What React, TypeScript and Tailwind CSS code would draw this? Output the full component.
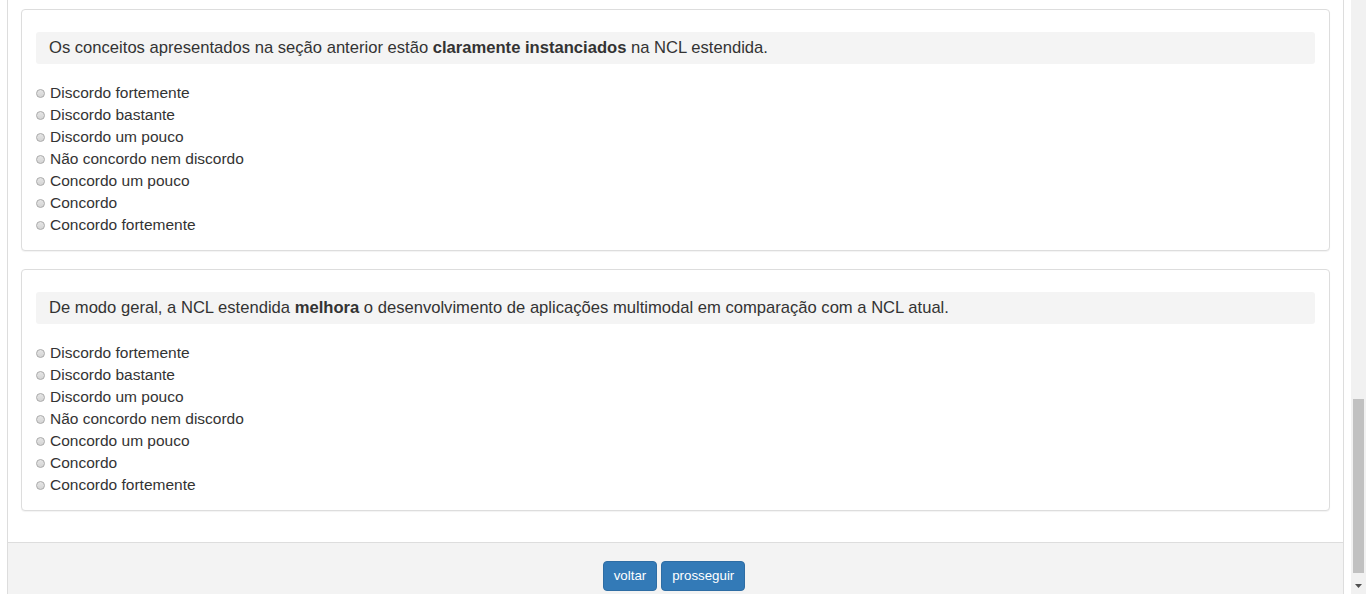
import React from "react";

const OPTIONS = [
  "Discordo fortemente",
  "Discordo bastante",
  "Discordo um pouco",
  "Não concordo nem discordo",
  "Concordo um pouco",
  "Concordo",
  "Concordo fortemente",
];

function Radio() {
  return (
    <span className="inline-block w-[9px] h-[9px] rounded-full border border-[#a9a9a9] bg-[linear-gradient(#e6e6e6,#d4d4d4)] shrink-0" />
  );
}

function Question({ children }: { children: React.ReactNode }) {
  return (
    <div className="rounded-[4px] border border-[#dddddd] bg-white shadow-[0_1px_1px_rgba(0,0,0,0.05)] px-[14px] pt-[22px] pb-[14px]">
      <div className="h-[32px] bg-[#f4f4f4] rounded-[3px] pl-[13px] flex items-center text-[16.6px] text-[#333]">
        <span>{children}</span>
      </div>
      <div className="mt-[18px] flex flex-col">
        {OPTIONS.map((o) => (
          <label key={o} className="h-[22px] flex items-center gap-[5px] text-[15.5px] text-[#333]">
            <Radio />
            <span>{o}</span>
          </label>
        ))}
      </div>
    </div>
  );
}

export default function App() {
  return (
    <div className="w-[1366px] h-[594px] overflow-hidden flex bg-white font-['Liberation_Sans',Arial,sans-serif]">
      <div className="w-[1351px] shrink-0">
        <div className="ml-[7px] w-[1337px] border-x border-[#dddddd] bg-white">
          <div className="px-[13px] pt-[9px] pb-[31px] flex flex-col gap-[18px]">
            <Question>
              Os conceitos apresentados na seção anterior estão{" "}
              <b className="font-bold">claramente instanciados</b> na NCL estendida.
            </Question>
            <Question>
              De modo geral, a NCL estendida <b className="font-bold">melhora</b> o desenvolvimento de
              aplicações multimodal em comparação com a NCL atual.
            </Question>
          </div>
          <div className="border-t border-[#dddddd] bg-[#f3f3f3] pt-[18px] pb-[18px] pr-[3px] flex justify-center gap-[4px]">
            <button className="h-[30px] px-[10px] rounded-[4px] bg-[#337ab7] border border-[#2e6da4] text-white text-[13.3px] leading-[18px]">
              voltar
            </button>
            <button className="h-[30px] px-[10px] rounded-[4px] bg-[#337ab7] border border-[#2e6da4] text-white text-[13.3px] leading-[18px]">
              prosseguir
            </button>
          </div>
        </div>
      </div>
      <div className="w-[15px] h-[594px] bg-[#f1f1f1] flex flex-col items-center">
        <div className="mt-[399px] w-[11px] h-[174px] bg-[#c1c1c1]" />
        <div className="mt-[11px]">
          <svg width="7" height="4" viewBox="0 0 7 4">
            <polygon points="0,0 7,0 3.5,4" fill="#505050" />
          </svg>
        </div>
      </div>
    </div>
  );
}
